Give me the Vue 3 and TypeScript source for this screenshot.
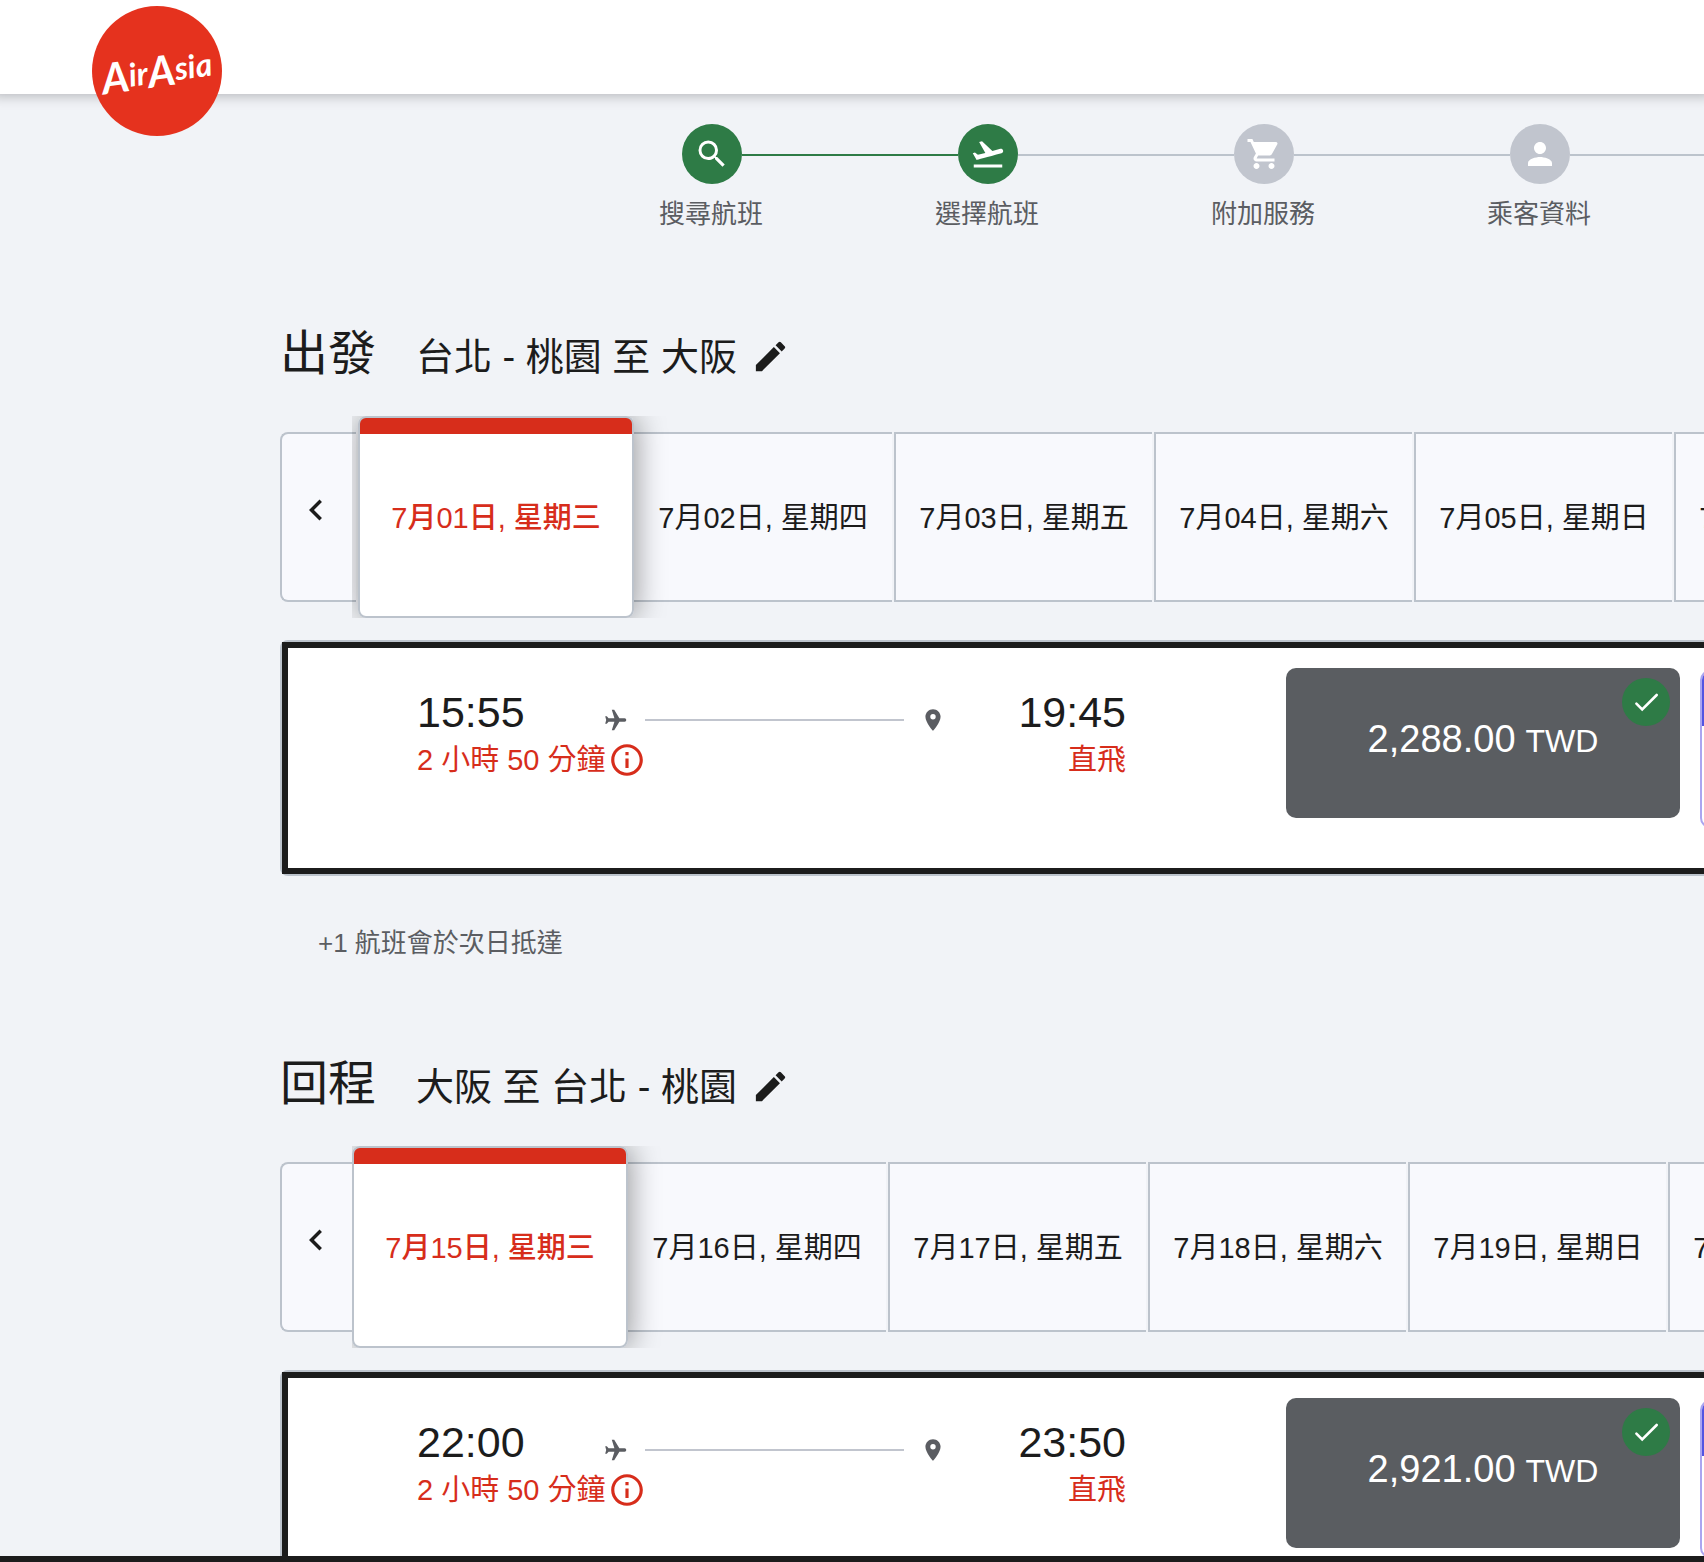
<script setup lang="ts">
interface Step {
  label: string
  icon: string
  done: boolean
  lineDone: boolean
}

interface Leg {
  id: string
  title: string
  route: string
  inset: boolean
  dates: string[]
  depart: string
  arrive: string
  duration: string
  stops: string
  price: string
  note?: string
}

const steps: Step[] = [
  {
    label: '搜尋航班',
    icon: 'M15.5 14h-.79l-.28-.27A6.47 6.47 0 0 0 16 9.5 6.5 6.5 0 1 0 9.5 16c1.61 0 3.09-.59 4.23-1.57l.27.28v.79l5 4.99L20.49 19l-4.99-5zm-6 0C7.01 14 5 11.99 5 9.5S7.01 5 9.5 5 14 7.01 14 9.5 11.99 14 9.5 14z',
    done: true,
    lineDone: true,
  },
  {
    label: '選擇航班',
    icon: 'M2.5 19h19v2h-19v-2zm19.57-9.36c-.21-.8-1.04-1.28-1.84-1.06L14.92 10l-6.9-6.43-1.93.51 4.14 7.17-4.97 1.33-1.97-1.54-1.45.39 2.59 4.49s7.12-1.9 16.57-4.43c.81-.23 1.28-1.05 1.07-1.85z',
    done: true,
    lineDone: false,
  },
  {
    label: '附加服務',
    icon: 'M7 18c-1.1 0-1.99.9-1.99 2S5.9 22 7 22s2-.9 2-2-.9-2-2-2zM1 2v2h2l3.6 7.59-1.35 2.45c-.16.28-.25.61-.25.96 0 1.1.9 2 2 2h12v-2H7.42c-.14 0-.25-.11-.25-.25l.03-.12.9-1.63h7.45c.75 0 1.41-.41 1.75-1.03l3.58-6.49A1 1 0 0 0 20 4H5.21l-.94-2H1zm16 16c-1.1 0-1.99.9-1.99 2s.89 2 1.99 2 2-.9 2-2-.9-2-2-2z',
    done: false,
    lineDone: false,
  },
  {
    label: '乘客資料',
    icon: 'M12 12c2.21 0 4-1.79 4-4s-1.79-4-4-4-4 1.79-4 4 1.79 4 4 4zm0 2c-2.67 0-8 1.34-8 4v2h16v-2c0-2.66-5.33-4-8-4z',
    done: false,
    lineDone: false,
  },
]

const legs: Leg[] = [
  {
    id: 'outbound',
    title: '出發',
    route: '台北 - 桃園 至 大阪',
    inset: true,
    dates: ['7月01日, 星期三', '7月02日, 星期四', '7月03日, 星期五', '7月04日, 星期六', '7月05日, 星期日', '7月06日, 星期一'],
    depart: '15:55',
    arrive: '19:45',
    duration: '2 小時 50 分鐘',
    stops: '直飛',
    price: '2,288.00',
    note: '+1 航班會於次日抵達',
  },
  {
    id: 'return',
    title: '回程',
    route: '大阪 至 台北 - 桃園',
    inset: false,
    dates: ['7月15日, 星期三', '7月16日, 星期四', '7月17日, 星期五', '7月18日, 星期六', '7月19日, 星期日', '7月20日, 星期一'],
    depart: '22:00',
    arrive: '23:50',
    duration: '2 小時 50 分鐘',
    stops: '直飛',
    price: '2,921.00',
  },
]
</script>

<template>
  <div class="page">
    <header class="topbar">
      <a class="logo" href="#" aria-label="AirAsia">
        <span class="wordmark"><span class="cap">A</span>ir<span class="cap">A</span>sia</span>
      </a>
    </header>

    <div class="content">
      <ol class="steps">
        <li v-for="step in steps" :key="step.label" class="step">
          <div class="step-row">
            <span class="step-dot" :class="{ done: step.done }">
              <svg viewBox="0 0 24 24" width="36" height="36" fill="currentColor"><path :d="step.icon" /></svg>
            </span>
            <span class="step-line" :class="{ done: step.lineDone }"></span>
          </div>
          <div class="step-label"><span>{{ step.label }}</span></div>
        </li>
      </ol>

      <main>
        <section v-for="leg in legs" :key="leg.id" class="leg">
          <div class="leg-head">
            <h2>{{ leg.title }}</h2>
            <p class="route">{{ leg.route }}</p>
            <button class="edit" type="button" aria-label="編輯">
              <svg viewBox="0 0 24 24" width="39" height="39" fill="currentColor">
                <path d="M3 17.25V21h3.75L17.81 9.94l-3.75-3.75L3 17.25zM20.71 7.04a1 1 0 0 0 0-1.41l-2.34-2.34a1 1 0 0 0-1.41 0l-1.83 1.83 3.75 3.75 1.83-1.83z" />
              </svg>
            </button>
          </div>

          <div class="dates">
            <button class="prev" type="button" aria-label="上一週">
              <svg viewBox="0 0 24 24" width="42" height="42" fill="currentColor">
                <path d="M15.41 16.59 10.83 12l4.58-4.59L14 6l-6 6 6 6z" />
              </svg>
            </button>
            <div class="date-track" :class="{ inset: leg.inset }">
              <button
                v-for="(date, i) in leg.dates"
                :key="date"
                type="button"
                class="date"
                :class="{ selected: i === 0, first: i === 1 }"
              >{{ date }}</button>
            </div>
          </div>

          <article class="card">
            <div class="card-inner">
              <div class="flight">
                <div class="times">
                  <span class="time">{{ leg.depart }}</span>
                  <div class="path">
                    <svg viewBox="0 0 24 24" width="24" height="24" fill="currentColor">
                      <path d="M21.6 10.3H16.4L11.2 1.7H8.8L11.4 10.3H5.6L3.8 8.2H2.2L3.2 12 2.2 15.8H3.8L5.6 13.7H11.4L8.8 22.3H11.2L16.4 13.7H21.6a1.7 1.7 0 0 0 0-3.4z" />
                    </svg>
                    <span class="path-line"></span>
                    <svg viewBox="0 0 24 24" width="26" height="26" fill="currentColor">
                      <path d="M12 2C8.13 2 5 5.13 5 9c0 5.25 7 13 7 13s7-7.75 7-13c0-3.87-3.13-7-7-7zm0 9.5a2.5 2.5 0 1 1 0-5 2.5 2.5 0 0 1 0 5z" />
                    </svg>
                  </div>
                  <span class="time">{{ leg.arrive }}</span>
                </div>
                <div class="details">
                  <span class="duration">
                    {{ leg.duration }}
                    <svg viewBox="0 0 24 24" width="38" height="38" fill="currentColor">
                      <path d="M11 7h2v2h-2zm0 4h2v6h-2zm1-9C6.48 2 2 6.48 2 12s4.48 10 10 10 10-4.48 10-10S17.52 2 12 2zm0 18c-4.41 0-8-3.59-8-8s3.59-8 8-8 8 3.59 8 8-3.59 8-8 8z" />
                    </svg>
                  </span>
                  <span>{{ leg.stops }}</span>
                </div>
              </div>

              <button class="fare" type="button">
                <span class="amount">{{ leg.price }}</span>
                <span class="currency">TWD</span>
                <span class="badge">
                  <svg viewBox="0 0 48 48" width="48" height="48" fill="none" stroke="currentColor" stroke-width="2.6" stroke-linecap="round">
                    <path d="M14.4 25.6l5.8 5.8L34.7 17" />
                  </svg>
                </span>
              </button>

              <div class="premium"><div class="premium-head"></div></div>
            </div>
          </article>

          <p v-if="leg.note" class="note">{{ leg.note }}</p>
        </section>
      </main>
    </div>

    <footer class="summary"></footer>
  </div>
</template>

<style>
body {
  margin: 0;
  overflow: hidden;
}
</style>

<style scoped>
.page {
  display: flex;
  flex-direction: column;
  height: 100vh;
  overflow: hidden;
  background: #f1f3f7;
  color: #1c1c1c;
  font-family: "Liberation Sans", "Noto Sans CJK TC", sans-serif;
  font-weight: 400;
}

svg {
  display: block;
  flex: none;
}

button {
  margin: 0;
  padding: 0;
  border: 0;
  background: none;
  color: inherit;
  font: inherit;
  cursor: pointer;
}

.topbar {
  position: relative;
  z-index: 1;
  flex: none;
  display: flex;
  align-items: flex-start;
  height: 94px;
  padding-left: 92px;
  background: #fff;
  box-shadow: 0 -6px 12px 8px rgba(0, 0, 0, 0.25);
}

.logo {
  flex: none;
  display: flex;
  align-items: center;
  justify-content: center;
  width: 130px;
  height: 130px;
  margin-top: 6px;
  border-radius: 50%;
  background: #e5321e;
  color: #fff;
  text-decoration: none;
}

.wordmark {
  font: italic 700 32px/40px Lato, sans-serif;
  white-space: nowrap;
  transform: rotate(-8deg);
}

.cap {
  font-size: 42px;
  vertical-align: -4px;
}

.content {
  flex: 1;
  min-height: 0;
  overflow: hidden;
}

.steps {
  display: flex;
  margin: 0 0 94px;
  padding: 30px 0 0 682px;
  list-style: none;
}

.step {
  flex: 0 0 276px;
}

.step:last-child {
  flex: 1;
}

.step-row {
  display: flex;
  align-items: center;
}

.step-dot {
  flex: none;
  display: flex;
  align-items: center;
  justify-content: center;
  width: 60px;
  height: 60px;
  border-radius: 50%;
  background: #c1c5ce;
  color: #fff;
}

.step-line {
  flex: 1;
  height: 2px;
  margin-top: 2px;
  background: #bcc3cc;
}

.step-dot.done,
.step-line.done {
  background: #2e7b46;
}

.step-label {
  display: flex;
  justify-content: center;
  width: 58px;
  margin-top: 15px;
  color: #5b5d62;
  font-size: 26px;
  line-height: 30px;
  white-space: nowrap;
}

main {
  display: flex;
  flex-direction: column;
  gap: 95px;
  padding-left: 280px;
}

.leg-head {
  display: flex;
  align-items: center;
  box-sizing: border-box;
  height: 60px;
  padding-top: 2px;
}

h2 {
  width: 136px;
  margin: 0;
  font-size: 48px;
  line-height: 58px;
  font-weight: 400;
}

.route {
  margin: 6px 0 0;
  font-size: 38px;
  line-height: 50px;
  white-space: nowrap;
}

.edit {
  margin: 4px 0 0 14px;
}

.dates {
  display: flex;
  align-items: center;
  margin-top: 33px;
}

.prev {
  flex: none;
  display: flex;
  align-items: center;
  box-sizing: border-box;
  width: 76px;
  height: 170px;
  margin-right: -4px;
  padding: 0 0 14px 13px;
  border: 2px solid #bcc3cc;
  border-right: 0;
  border-radius: 8px 0 0 8px;
  background: #f8f9fd;
}

.date-track {
  position: relative;
  flex: 1;
  min-width: 0;
  display: flex;
  align-items: center;
  gap: 2px;
  height: 202px;
  overflow: hidden;
}

.date-track.inset {
  padding-left: 6px;
}

.date {
  flex: none;
  box-sizing: border-box;
  width: 258px;
  height: 170px;
  padding-top: 2px;
  border: solid #bcc3cc;
  border-width: 2px 0 2px 2px;
  background: #f8f9fd;
  font-size: 29px;
  line-height: 40px;
  white-space: nowrap;
}

.date.first {
  border-left-width: 0;
}

.date.selected {
  position: relative;
  z-index: 1;
  width: 276px;
  height: 202px;
  margin-right: -2px;
  border-width: 2px;
  border-radius: 8px;
  background: linear-gradient(#d72d1b 16px, #fff 16px);
  box-shadow: 2px 0 30px rgba(0, 0, 0, 0.4);
  color: #d72d1b;
  font-weight: 500;
}

.card {
  margin-top: 22px;
  border: 2px solid #bcc3cc;
  border-right: 0;
  border-radius: 8px 0 0 8px;
  background: #bcc3cc;
}

.card-inner {
  display: flex;
  align-items: flex-start;
  box-sizing: border-box;
  min-height: 232px;
  padding: 20px 0 20px 129px;
  overflow: hidden;
  border: 6px solid #1c1c1c;
  border-right: 0;
  background: #fff;
}

.flight {
  flex: none;
  width: 709px;
  margin: 19px 160px 0 0;
}

.times,
.details {
  display: flex;
  justify-content: space-between;
}

.times {
  align-items: flex-end;
}

.time {
  font-size: 43px;
  line-height: 50px;
}

.path {
  display: flex;
  align-items: center;
  width: 343px;
  margin: 0 0 4px 6px;
  color: #5b5d62;
}

.path-line {
  flex: 1;
  height: 2px;
  margin: 0 16px 0 18px;
  background: #c1c5ce;
}

.details {
  margin-top: 4px;
  color: #d72d1b;
  font-size: 29px;
  line-height: 38px;
}

.duration {
  display: flex;
  gap: 2px;
}

.fare {
  position: relative;
  flex: none;
  width: 394px;
  height: 150px;
  padding-bottom: 8px;
  border-radius: 10px;
  background: #5a5d61;
  color: #fff;
}

.amount {
  margin-right: 10px;
  font-size: 38px;
}

.currency {
  font-size: 32px;
}

.badge {
  position: absolute;
  top: 10px;
  right: 10px;
  border-radius: 50%;
  background: #2e7b46;
}

.premium {
  flex: none;
  box-sizing: border-box;
  width: 394px;
  height: 158px;
  margin: 2px 0 0 20px;
  overflow: hidden;
  border: 2px solid #aba5f0;
  border-radius: 10px;
  background: #fff;
}

.premium-head {
  height: 54px;
  background: #5354e2;
}

.note {
  margin: 52px 0 0 38px;
  color: #5b5d62;
  font-size: 26px;
  line-height: 30px;
}

.summary {
  flex: none;
  height: 6px;
  background: #1c1c1c;
}
</style>
